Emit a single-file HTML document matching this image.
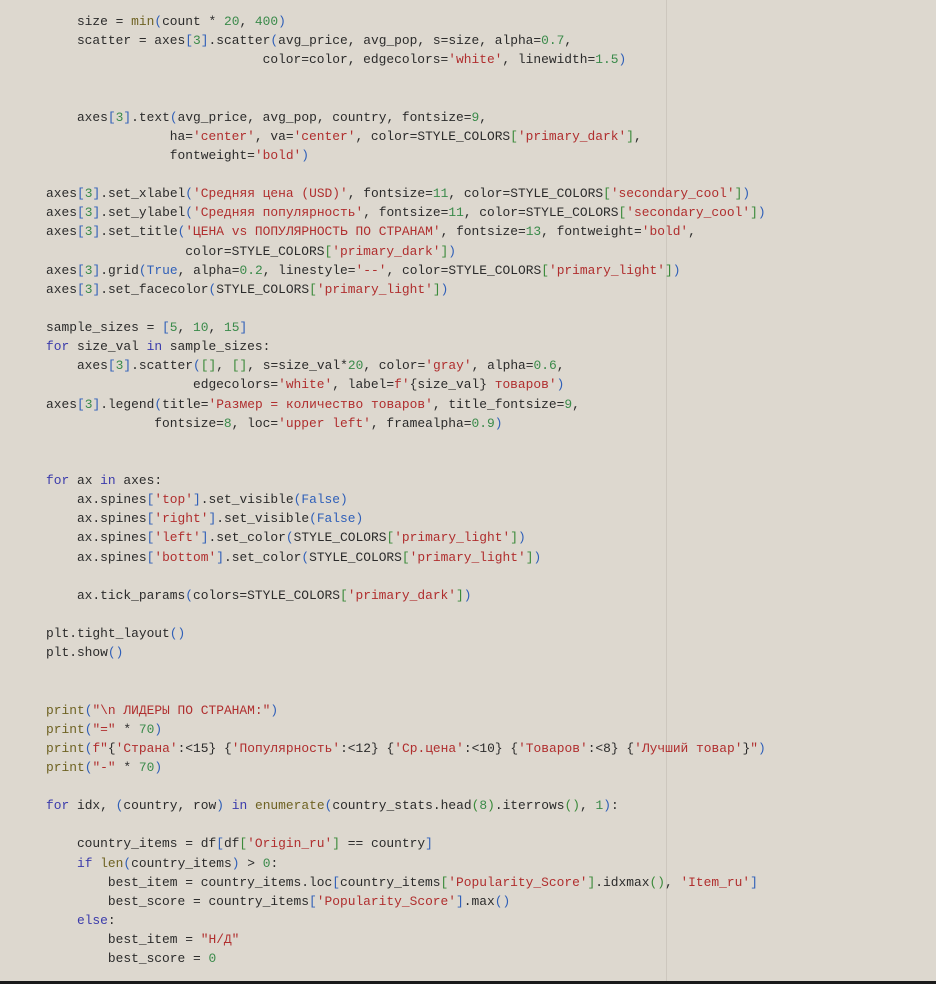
<!DOCTYPE html>
<html><head><meta charset="utf-8"><style>
html,body{margin:0;padding:0;}
body{width:936px;height:984px;background:#ddd8cf;position:relative;overflow:hidden;}
#vl{position:absolute;left:666px;top:0;width:1px;height:982px;background:#cdc7be;}
#bb{position:absolute;left:0;top:981px;width:936px;height:3px;background:#1a1a1a;}
pre{position:absolute;left:46px;top:12px;margin:0;font-family:"Liberation Mono","DejaVu Sans Mono",monospace;font-size:12.9px;line-height:19.12px;color:#2b2b2b;}
.s{color:#b02e2e}.n{color:#3a8a4a}.k{color:#3b3bab}.c{color:#2f5fb8}.b{color:#6e6222}.d0{color:#2f5fb8}.d1{color:#3a8a3a}
</style></head><body>
<div id="vl"></div>
<pre id="code">    size = min(count * 20, 400)
    scatter = axes[3].scatter(avg_price, avg_pop, s=size, alpha=0.7,
                            color=color, edgecolors='white', linewidth=1.5)


    axes[3].text(avg_price, avg_pop, country, fontsize=9,
                ha='center', va='center', color=STYLE_COLORS['primary_dark'],
                fontweight='bold')

axes[3].set_xlabel('Средняя цена (USD)', fontsize=11, color=STYLE_COLORS['secondary_cool'])
axes[3].set_ylabel('Средняя популярность', fontsize=11, color=STYLE_COLORS['secondary_cool'])
axes[3].set_title('ЦЕНА vs ПОПУЛЯРНОСТЬ ПО СТРАНАМ', fontsize=13, fontweight='bold',
                  color=STYLE_COLORS['primary_dark'])
axes[3].grid(True, alpha=0.2, linestyle='--', color=STYLE_COLORS['primary_light'])
axes[3].set_facecolor(STYLE_COLORS['primary_light'])

sample_sizes = [5, 10, 15]
for size_val in sample_sizes:
    axes[3].scatter([], [], s=size_val*20, color='gray', alpha=0.6,
                   edgecolors='white', label=f'{size_val} товаров')
axes[3].legend(title='Размер = количество товаров', title_fontsize=9,
              fontsize=8, loc='upper left', framealpha=0.9)


for ax in axes:
    ax.spines['top'].set_visible(False)
    ax.spines['right'].set_visible(False)
    ax.spines['left'].set_color(STYLE_COLORS['primary_light'])
    ax.spines['bottom'].set_color(STYLE_COLORS['primary_light'])

    ax.tick_params(colors=STYLE_COLORS['primary_dark'])

plt.tight_layout()
plt.show()


print("\n ЛИДЕРЫ ПО СТРАНАМ:")
print("=" * 70)
print(f"{'Страна':&lt;15} {'Популярность':&lt;12} {'Ср.цена':&lt;10} {'Товаров':&lt;8} {'Лучший товар'}")
print("-" * 70)

for idx, (country, row) in enumerate(country_stats.head(8).iterrows(), 1):

    country_items = df[df['Origin_ru'] == country]
    if len(country_items) &gt; 0:
        best_item = country_items.loc[country_items['Popularity_Score'].idxmax(), 'Item_ru']
        best_score = country_items['Popularity_Score'].max()
    else:
        best_item = "Н/Д"
        best_score = 0</pre>
<div id="bb"></div>
<script>
(function(){
var pre=document.getElementById('code');var src=pre.textContent;
var kw={'for':1,'in':1,'if':1,'else':1},cs={'True':1,'False':1},bi={'min':1,'print':1,'len':1,'enumerate':1};
function esc(t){return t.replace(/&/g,'&amp;').replace(/</g,'&lt;').replace(/>/g,'&gt;');}
function sp(c,t){return '<span class="'+c+'">'+esc(t)+'</span>';}
var out='',i=0,depth=0,n=src.length;
while(i<n){var ch=src[i];
 if((ch==='f'&&(src[i+1]==='"'||src[i+1]==="'"))||ch==='"'||ch==="'"){
  var isf=ch==='f';var q=isf?src[i+1]:ch;var j=i+(isf?2:1);
  if(isf){out+=sp('s','f'+q);var buf='';
   while(j<n&&src[j]!==q){
    if(src[j]==='{'){if(buf){out+=sp('s',buf);buf='';}var k=src.indexOf('}',j);var inner=src.slice(j,k+1);
     out+=esc(inner).replace(/'[^']*'/g,function(m){return '<span class="s">'+m+'</span>';});j=k+1;}
    else{buf+=src[j];j++;}}
   out+=sp('s',buf+q);i=j+1;continue;}
  while(j<n&&src[j]!==q)j++;out+=sp('s',src.slice(i,j+1));i=j+1;continue;}
 if(/[0-9]/.test(ch)){var j=i;while(j<n&&/[0-9.]/.test(src[j]))j++;out+=sp('n',src.slice(i,j));i=j;continue;}
 if(/[A-Za-z_]/.test(ch)){var j=i;while(j<n&&/[A-Za-z_0-9]/.test(src[j]))j++;var w=src.slice(i,j);
  out+=kw[w]?sp('k',w):cs[w]?sp('c',w):bi[w]?sp('b',w):esc(w);i=j;continue;}
 if('([{'.indexOf(ch)>=0){out+=sp('d'+(depth%2),ch);depth++;i++;continue;}
 if(')]}'.indexOf(ch)>=0){depth=Math.max(0,depth-1);out+=sp('d'+(depth%2),ch);i++;continue;}
 out+=esc(ch);i++;}
pre.innerHTML=out;
})();
</script>
</body></html>
